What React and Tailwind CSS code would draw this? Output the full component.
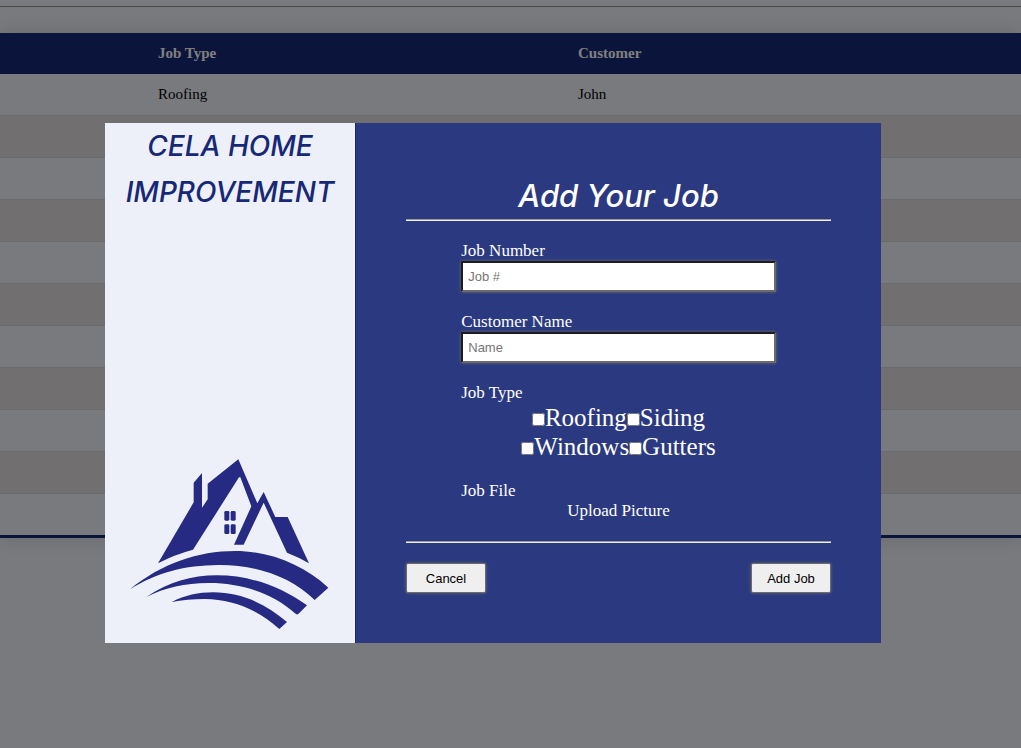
const jobs = [
  { type: 'Roofing', customer: 'John' },
  ...Array.from({ length: 10 }, () => ({ type: '', customer: '' })),
];

function JobsPage() {
  return (
    <div className="min-h-screen bg-[#f3f5fb] pt-1.5">
      <hr className="border-t border-[#90948a]" />
      <table className="mt-[26px] w-full table-fixed border-separate border-spacing-0 text-left text-[15px] leading-[17px] shadow-[0_0_20px_rgba(0,0,0,0.15)]">
        <colgroup>
          <col className="w-[143px]" />
          <col className="w-[420px]" />
          <col />
        </colgroup>
        <thead>
          <tr className="h-[41px] bg-[#162876] text-white">
            <td />
            <th className="px-[15px] font-bold">Job Type</th>
            <th className="px-[15px] font-bold">Customer</th>
          </tr>
        </thead>
        <tbody className="[&_td]:border-b [&_td]:border-[#d6d6d6] [&_tr:last-child_td]:border-b-3 [&_tr:last-child_td]:border-[#162876]">
          {jobs.map((job, i) => (
            <tr key={i} className="h-[42px] even:bg-[#e3dfdf] last:h-11">
              <td />
              <td className="px-[15px]">{job.type}</td>
              <td className="px-[15px]">{job.customer}</td>
            </tr>
          ))}
        </tbody>
      </table>
    </div>
  );
}

function HouseLogo() {
  return (
    <svg viewBox="0 0 750 609" className="w-full" fill="#262a83" role="img" aria-label="House on a hill">
      <path d="M159 370 L266 187 V128 L291 99 V203 L308 178 V131 L400 58 L457 190 L476 156 L511 231 H548 L612 370 Q580 351 546 338 L476 188 L416 314 H387 L439 199 L406 112 L402 112 L264 329 Q210 343 159 370 Z" />
      <rect x="358" y="213" width="15" height="29" rx="4" />
      <rect x="377" y="213" width="15" height="29" rx="4" />
      <rect x="358" y="253" width="15" height="29" rx="4" />
      <rect x="377" y="253" width="15" height="29" rx="4" />
      <path d="M75 448 C170 370 280 333 390 333 C495 333 595 375 670 443 L629 480 C555 408 450 374 340 375 C240 376 155 397 75 448 Z" />
      <path d="M124 471 C190 427 260 406 335 406 C440 406 530 442 606 496 L580 522 Q575 525 570 520 C500 456 400 428 310 429 C240 430 180 442 124 471 Z" />
      <path d="M200 486 C240 466 280 457 325 457 C410 457 485 493 546 546 L523 567 C460 508 380 478 300 477 C265 477 230 480 200 486 Z" />
    </svg>
  );
}

function TextField({ id, label, placeholder }) {
  return (
    <div className="flex flex-col">
      <label htmlFor={id}>{label}</label>
      <input
        id={id}
        type="text"
        placeholder={placeholder}
        className="h-[31px] w-full border-2 border-t-[#1c1c1c] border-r-[#6b6b6b] border-b-[#6b6b6b] border-l-[#1c1c1c] bg-white px-[5px] font-['Liberation_Sans',sans-serif] text-[13px] text-black shadow-[0_0_3px_#6b6b6b] placeholder:text-[#757575]"
      />
    </div>
  );
}

function CheckOption({ name }) {
  return (
    <label>
      <input type="checkbox" name={name} className="m-0 h-[13px] w-[13px]" />
      {name}
    </label>
  );
}

function Divider() {
  return <hr className="h-0.5 border-t border-b border-t-[#9a9a9a] border-b-[#eeeeee]" />;
}

const buttonClass =
  "h-[30px] w-20 rounded-xs border border-[#6b6b6b] bg-[#efefef] pt-px font-['Liberation_Sans',sans-serif] text-[13px] text-black shadow-[0_0_3px_#6b6b6b]";

function AddJobModal() {
  return (
    <div className="fixed inset-0 overflow-auto bg-black/50 pt-[123px] pl-[105px]">
      <div role="dialog" aria-labelledby="add-job-title" className="flex w-[776px] max-w-full">
        <aside className="flex w-[250px] shrink-0 flex-col justify-between bg-[#edf0f8]">
          <h2 className="text-center font-['Inter',sans-serif] text-[28px] leading-[46px] font-medium text-[#162876] italic">
            CELA HOME IMPROVEMENT
          </h2>
          <HouseLogo />
        </aside>
        <form
          className="flex grow flex-col gap-5 border-l border-[#162876] bg-[#2b3a80] p-[50px] text-[17px] leading-5 text-white"
          onSubmit={(e) => e.preventDefault()}
        >
          <div>
            <h1
              id="add-job-title"
              className="text-center font-['Inter',sans-serif] text-[31px] leading-[46px] font-medium italic"
            >
              Add Your Job
            </h1>
            <Divider />
          </div>
          <div className="mx-auto flex w-[74%] flex-col gap-5">
            <TextField id="job-number" label="Job Number" placeholder="Job #" />
            <TextField id="customer-name" label="Customer Name" placeholder="Name" />
            <fieldset>
              <legend>Job Type</legend>
              <div className="flex justify-center text-[25px] leading-[29px]">
                <CheckOption name="Roofing" />
                <CheckOption name="Siding" />
              </div>
              <div className="flex justify-center text-[25px] leading-[29px]">
                <CheckOption name="Windows" />
                <CheckOption name="Gutters" />
              </div>
            </fieldset>
            <div>
              <p>Job File</p>
              <label className="relative block cursor-pointer text-center">
                Upload Picture
                <input type="file" accept="image/*" className="sr-only" />
              </label>
            </div>
          </div>
          <Divider />
          <div className="flex justify-between">
            <button type="button" className={buttonClass}>Cancel</button>
            <button type="submit" className={buttonClass}>Add Job</button>
          </div>
        </form>
      </div>
    </div>
  );
}

export default function App() {
  return (
    <div className="font-['Liberation_Serif',serif] text-black">
      <JobsPage />
      <AddJobModal />
    </div>
  );
}
